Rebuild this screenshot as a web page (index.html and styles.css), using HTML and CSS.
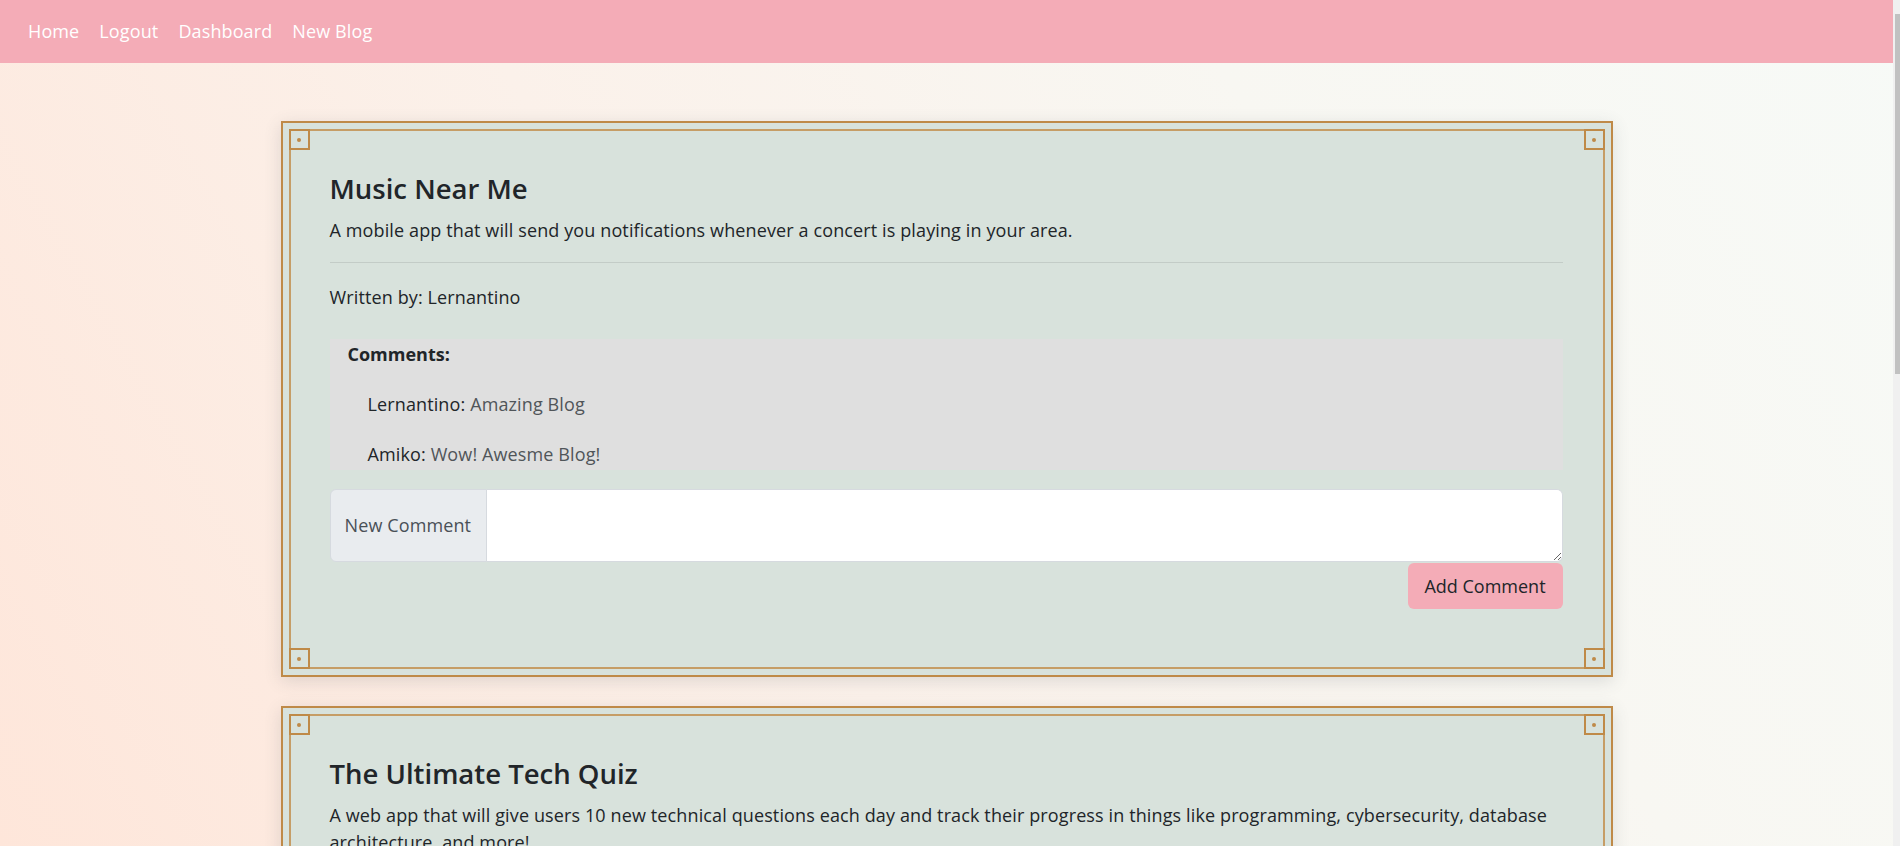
FILE: index.html
```html
<!DOCTYPE html>
<html lang="en">
<head>
<meta charset="utf-8">
<title>Tech Blog</title>
<link rel="stylesheet" href="styles.css">
</head>
<body>
<nav class="navbar">
  <a class="nav-link" href="#">Home</a>
  <a class="nav-link" href="#">Logout</a>
  <a class="nav-link" href="#">Dashboard</a>
  <a class="nav-link" href="#">New Blog</a>
</nav>

<main class="feed">
  <article class="post">
    <div class="post-inner">
      <span class="corner corner-tl"></span>
      <span class="corner corner-tr"></span>
      <span class="corner corner-bl"></span>
      <span class="corner corner-br"></span>
      <h3 class="post-title">Music Near Me</h3>
      <p class="post-desc">A mobile app that will send you notifications whenever a concert is playing in your area.</p>
      <hr class="divider">
      <p class="post-author">Written by: Lernantino</p>
      <div class="comments">
        <p class="comments-title">Comments:</p>
        <ul class="comment-list">
          <li><span class="comment-user">Lernantino:</span> <span class="comment-text">Amazing Blog</span></li>
          <li><span class="comment-user">Amiko:</span> <span class="comment-text">Wow! Awesme Blog!</span></li>
        </ul>
      </div>
      <form class="comment-form">
        <div class="input-group">
          <span class="input-label">New Comment</span>
          <textarea class="input-field"></textarea>
        </div>
        <div class="form-actions">
          <button type="button" class="btn-add">Add Comment</button>
        </div>
      </form>
    </div>
  </article>

  <article class="post">
    <div class="post-inner">
      <span class="corner corner-tl"></span>
      <span class="corner corner-tr"></span>
      <span class="corner corner-bl"></span>
      <span class="corner corner-br"></span>
      <h3 class="post-title">The Ultimate Tech Quiz</h3>
      <p class="post-desc">A web app that will give users 10 new technical questions each day and track their progress in things like programming, cybersecurity, database architecture, and more!</p>
      <hr class="divider">
      <p class="post-author">Written by: Amiko</p>
      <div class="comments">
        <p class="comments-title">Comments:</p>
        <ul class="comment-list">
          <li><span class="comment-user">Lernantino:</span> <span class="comment-text">Great idea!</span></li>
        </ul>
      </div>
      <form class="comment-form">
        <div class="input-group">
          <span class="input-label">New Comment</span>
          <textarea class="input-field"></textarea>
        </div>
        <div class="form-actions">
          <button type="button" class="btn-add">Add Comment</button>
        </div>
      </form>
    </div>
  </article>

  <article class="post">
    <div class="post-inner">
      <span class="corner corner-tl"></span>
      <span class="corner corner-tr"></span>
      <span class="corner corner-bl"></span>
      <span class="corner corner-br"></span>
      <h3 class="post-title">Roll 'Em Up</h3>
      <p class="post-desc">A game for Windows and macOS where players move a ball through a series of increasingly challenging mazes.</p>
      <hr class="divider">
      <p class="post-author">Written by: Lernantino</p>
      <div class="comments">
        <p class="comments-title">Comments:</p>
        <ul class="comment-list">
          <li><span class="comment-user">Amiko:</span> <span class="comment-text">Can't wait to play it!</span></li>
          <li><span class="comment-user">Lernantino:</span> <span class="comment-text">Thanks!</span></li>
        </ul>
      </div>
      <form class="comment-form">
        <div class="input-group">
          <span class="input-label">New Comment</span>
          <textarea class="input-field"></textarea>
        </div>
        <div class="form-actions">
          <button type="button" class="btn-add">Add Comment</button>
        </div>
      </form>
    </div>
  </article>
</main>

<div class="scrollbar" aria-hidden="true"><div class="scrollbar-thumb"></div></div>
</body>
</html>
```

FILE: styles.css
```css
* {
  box-sizing: border-box;
}

html,
body {
  margin: 0;
  padding: 0;
}

body {
  font-family: "Open Sans", "Noto Sans", sans-serif;
  font-size: 18px;
  line-height: 27px;
  letter-spacing: 0.12px;
  color: #212529;
  background: linear-gradient(60deg, #fee6da 0%, #fbf1ea 40%, #f8f7f2 70%, #f7faf7 100%);
  background-attachment: fixed;
  min-height: 100vh;
  padding-right: 7px;
}

/* fake window scrollbar, drawn over the right edge */
.scrollbar {
  position: fixed;
  top: 0;
  right: 0;
  width: 7px;
  height: 100vh;
  background: #f0f0f0;
}

.scrollbar-thumb {
  position: absolute;
  top: 14px;
  left: 2px;
  width: 5px;
  height: 360px;
  background: #c1c1c1;
}

/* ---------- navbar ---------- */
.navbar {
  height: 63px;
  background: #f4acb7;
  display: flex;
  align-items: center;
  padding-left: 18px;
}

.nav-link {
  color: #ffffff;
  text-decoration: none;
  font-size: 18px;
  padding: 0 10px;
}

/* ---------- feed ---------- */
.feed {
  padding: 58px 0 58px;
  display: flex;
  flex-direction: column;
  align-items: center;
  gap: 29px;
}

.post {
  width: 1332px;
  background: #d8e2dc;
  border: 2px solid #bf8a48;
  padding: 6px;
  box-shadow: 0 4px 16px rgba(70, 80, 90, 0.16);
}

.post-inner {
  position: relative;
  border: 2px solid #c69d66;
  padding: 41px 40px 40px 39px;
}

/* decorative corners */
.corner {
  position: absolute;
  width: 21px;
  height: 21px;
  border: 2px solid #bf8a48;
}

.corner::after {
  content: "";
  position: absolute;
  left: 6.5px;
  top: 6.5px;
  width: 4px;
  height: 4px;
  border-radius: 50%;
  background: #bf8a48;
}

.corner-tl { top: -2px; left: -2px; }
.corner-tr { top: -2px; right: -2px; }
.corner-bl { bottom: -2px; left: -2px; }
.corner-br { bottom: -2px; right: -2px; }

.post-title {
  margin: 0 0 11px;
  font-size: 27.5px;
  line-height: 34px;
  font-weight: 600;
  letter-spacing: 0;
  color: #212529;
}

.post-desc {
  margin: 0 0 18px;
}

.divider {
  margin: 0;
  border: 0;
  border-top: 1px solid #c3ccc7;
  height: 0;
}

.post-author {
  margin: 21px 0 28px;
}

/* ---------- comments ---------- */
.comments {
  background: #dfdfdf;
  padding: 2px 18px 2px;
}

.comments-title {
  margin: 0;
  font-weight: 700;
  letter-spacing: 0;
}

.comment-list {
  list-style: none;
  margin: 0;
  padding: 0 0 0 20px;
}

.comment-list li {
  margin-top: 23px;
}

.comment-user {
  color: #212529;
}

.comment-text {
  color: #505559;
}

/* ---------- form ---------- */
.comment-form {
  margin: 19px 0 18px;
}

.input-group {
  display: flex;
  height: 73px;
}

.input-label {
  flex: 0 0 157px;
  display: flex;
  align-items: center;
  padding: 0 12px 0 14px;
  background: #e9ecef;
  border: 1px solid #d6dadf;
  border-radius: 6px 0 0 6px;
  color: #495057;
  white-space: nowrap;
}

.input-field {
  flex: 1;
  margin: 0;
  border: 1px solid #d6dadf;
  border-left: 0;
  border-radius: 0 6px 6px 0;
  background: #ffffff;
  font: inherit;
  padding: 6px 12px;
  resize: vertical;
}

.form-actions {
  display: flex;
  justify-content: flex-end;
  margin-top: 1px;
}

.btn-add {
  height: 46px;
  padding: 0 14px;
  min-width: 155px;
  border: 0;
  border-radius: 6px;
  background: #f4acb7;
  color: #212529;
  font: inherit;
  font-size: 18px;
  cursor: pointer;
}
```
